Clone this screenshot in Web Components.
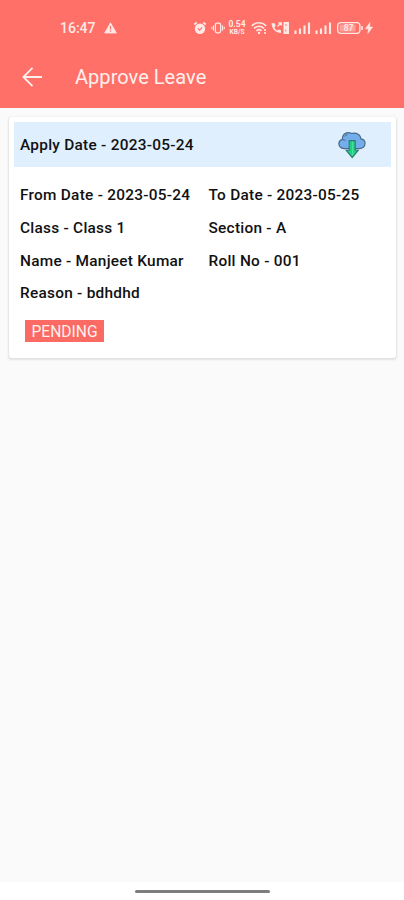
<!DOCTYPE html>
<html lang="en">
<head>
<meta charset="utf-8">
<title>Approve Leave</title>
<style>
html,body{margin:0;height:100%}
body{font-family:Roboto,"Liberation Sans",sans-serif;background:#fafafa;overflow:hidden}
</style>
</head>
<body>
<leave-screen></leave-screen>
<script>
const define = (name, html) => customElements.define(name, class extends HTMLElement {
  constructor() {
    super();
    this.attachShadow({mode: 'open'}).innerHTML = html;
  }
});

define('status-bar', `
<style>
:host{display:flex;box-sizing:border-box;height:50px;padding:6px 31px 0 60px;align-items:center;color:#ffe9e6}
time{font-size:14px;line-height:16px;font-weight:500;letter-spacing:0;width:36px;white-space:nowrap}
svg{display:block;flex:none;fill:none;stroke:currentColor}
.warn{margin-left:8px}
.tray{margin-left:auto;display:flex;align-items:center}
.rate{width:20px;font-size:8.5px;line-height:8px;font-weight:700;text-align:center;margin:0 4px 0 2px;white-space:nowrap}
.rate span{display:block}
.rate .unit{font-size:6.6px;line-height:8px}
</style>
<time>16:47</time>
<svg class="warn" width="13" height="12" viewBox="0 0 13 12"><path d="M6.5 .8 12.3 11H.7z" fill="currentColor" stroke-width=".8" stroke-linejoin="round"/><path d="M6.5 4v3.4M6.5 8.4v1.3" stroke="#fe7068" stroke-width="1.2"/></svg>
<div class="tray">
<svg width="14" height="14" viewBox="0 0 14 14"><circle cx="7" cy="7.7" r="5.2" fill="currentColor" stroke="none"/><path d="m1.3 3.5 2.4-2M12.7 3.5l-2.4-2" stroke-width="1.7"/><path d="m4.8 7.3 1.8 1.8 2.5-2.7" stroke="#fe7068" stroke-width="1.2"/></svg>
<svg width="14" height="14" viewBox="0 0 16 14" style="margin-left:4px"><rect x="5" y="1.5" width="6" height="11" rx="2" stroke-width="1.5"/><path d="M2.8 4v6M13.2 4v6M.9 5.5v3M15.1 5.5v3" stroke-width="1.2"/></svg>
<div class="rate"><span>0.54</span><span class="unit">KB/S</span></div>
<svg width="17" height="14" viewBox="0 0 17 14"><path d="M.8 4.8C5 .8 11 .8 15.2 4.8M3 7.4c3-2.8 7-2.8 10 0M5.4 9.8c1.6-1.4 3.6-1.4 5.2 0" stroke-width="1.6"/><circle cx="8" cy="11.9" r="1.2" fill="currentColor" stroke="none"/><path d="M14 8v5" stroke-width="1.6" stroke-dasharray="2 1"/></svg>
<svg width="19" height="14" viewBox="0 0 19 14" style="margin-left:3px"><path d="M.6 2.2c.2 5.5 3.7 9.3 9.4 9.8V9.2L7.6 8.5l-1.5 1C4.8 8.7 4 7.7 3.4 6.4L4.6 5l-.8-2.8z" fill="currentColor" stroke="none"/><path d="M6.4 5.5 10.1 2M7.2 1.8h3.1v3" stroke-width="1.2"/><path d="M12.5 1h5.5v12h-5.5z" fill="currentColor" stroke="none"/><path d="M14 4h2M14.8 8.5v2" stroke="#fe7068" stroke-width=".9"/></svg>
<svg width="17" height="14" viewBox="0 0 17 14" style="margin-left:4px"><path d="M1.5 9.5v3.5M6 7.5V13M10.5 4.5V13M15 1.5V13" stroke-width="2.1"/></svg>
<svg width="17" height="14" viewBox="0 0 17 14" style="margin-left:4px"><path d="M1.5 9.5v3.5M6 7.5V13M10.5 4.5V13M15 1.5V13" stroke-width="2.1"/></svg>
<svg width="26" height="12" viewBox="0 0 26 12" style="margin-left:5px"><rect x=".7" y=".7" width="22.2" height="10.6" rx="3" stroke-width="1.3"/><path d="M25 4v4" stroke-width="1.5"/><rect x="2.5" y="2.5" width="16" height="7" rx="1.2" fill="currentColor" fill-opacity=".4" stroke="none"/><text x="11.5" y="9" text-anchor="middle" font-size="8.5" font-weight="600" fill="currentColor" stroke="none">87</text></svg>
<svg width="8" height="12" viewBox="0 0 8 12" style="margin-left:2px"><path d="M5 .5.4 6.8h3L2.8 11.5 7.7 5H4.6z" fill="currentColor" stroke="currentColor" stroke-width=".5"/></svg>
</div>`);

define('app-bar', `
<style>
:host{display:flex;align-items:center;box-sizing:border-box;height:58px;padding:0 22px 4px;color:#fff0ee}
svg{display:block;fill:none;stroke:currentColor;stroke-width:1.8}
h1{margin:0 0 0 33px;font-size:20px;line-height:24px;font-weight:400;letter-spacing:.04px;white-space:nowrap}
</style>
<svg width="20" height="20" viewBox="0 0 20 20"><path d="M20 10H1.4M10.5.9 1.4 10l9.1 9.1"/></svg>
<h1><slot></slot></h1>`);

define('cloud-download', `
<style>:host{display:block}svg{display:block}</style>
<svg width="28" height="28" viewBox="0 0 28 28" stroke-linejoin="round"><path d="M6.2 17.6C2.4 17.3.7 14.8.9 12.4 1 10 3 8.8 4.2 8.5 4.2 4 7.3 1.4 10.6 1.6c1.2 0 2 .3 2.9.9C18 1 22.6 3.6 22.8 7.8c3 .4 4.4 2.6 4.2 5-.2 2.9-2.3 4.5-5.2 4.8z" fill="#74aeea" stroke="#49688a" stroke-width="1.2"/><path d="M4.4 8.7c1.2-.2 2.3.2 3 .8M7 5.5c.5-1 1.3-1.6 2.4-1.9" fill="none" stroke="#49688a" stroke-width="1"/><path d="M11.2 9.6h6v9.6h3.2L14.2 26.6 8 19.2h3.2z" fill="#20cf83" stroke="#2f7873" stroke-width="1.1"/><path d="M15.2 10.4v13.6l-1 1.2V10.4z" fill="#4fe3a6"/></svg>`);

define('info-field', `
<style>:host{display:block;font-size:15.4px;font-weight:500;line-height:18px;letter-spacing:.26px;color:#111;white-space:nowrap;padding-top:1px}</style>
<slot></slot>`);

define('status-tag', `
<style>:host{display:block;box-sizing:border-box;width:79px;height:22px;background:#fb6a63;color:#fff0ee;font-size:15.6px;line-height:24px;text-align:center;white-space:nowrap}</style>
<slot></slot>`);

define('leave-card', `
<style>
:host{display:block;box-sizing:border-box;height:241px;margin:9px 8px 0 9px;padding:5px;background:#fff;border-radius:3px;box-shadow:0 1px 2px 1px rgba(0,0,0,.1)}
header{display:flex;justify-content:space-between;align-items:center;box-sizing:border-box;height:45px;padding:0 25px 0 6px;background:#dfeffe}
.grid{display:grid;grid-template-columns:188.5px 1fr;grid-auto-rows:32.7px;align-items:center;padding:11.4px 0 0 6px}
footer{padding:10.6px 0 0 11px}
</style>
<header><slot name="date"></slot><cloud-download></cloud-download></header>
<div class="grid"><slot></slot></div>
<footer><slot name="status"></slot></footer>`);

define('leave-screen', `
<style>
:host{display:flex;flex-direction:column;height:900px}
.top{background:#fe7068;height:108px;flex:none}
main{flex:1;background:#fafafa}
nav{height:18px;background:#fff;display:flex;justify-content:center;align-items:center}
nav i{display:block;width:135px;height:3px;border-radius:2px;background:#7d7d7d}
</style>
<div class="top"><status-bar></status-bar><app-bar>Approve Leave</app-bar></div>
<main>
<leave-card>
<info-field slot="date">Apply Date - 2023-05-24</info-field>
<info-field>From Date - 2023-05-24</info-field>
<info-field>To Date - 2023-05-25</info-field>
<info-field>Class - Class 1</info-field>
<info-field>Section - A</info-field>
<info-field>Name - Manjeet Kumar</info-field>
<info-field>Roll No - 001</info-field>
<info-field>Reason - bdhdhd</info-field>
<status-tag slot="status">PENDING</status-tag>
</leave-card>
</main>
<nav><i></i></nav>`);
</script>
</body>
</html>
